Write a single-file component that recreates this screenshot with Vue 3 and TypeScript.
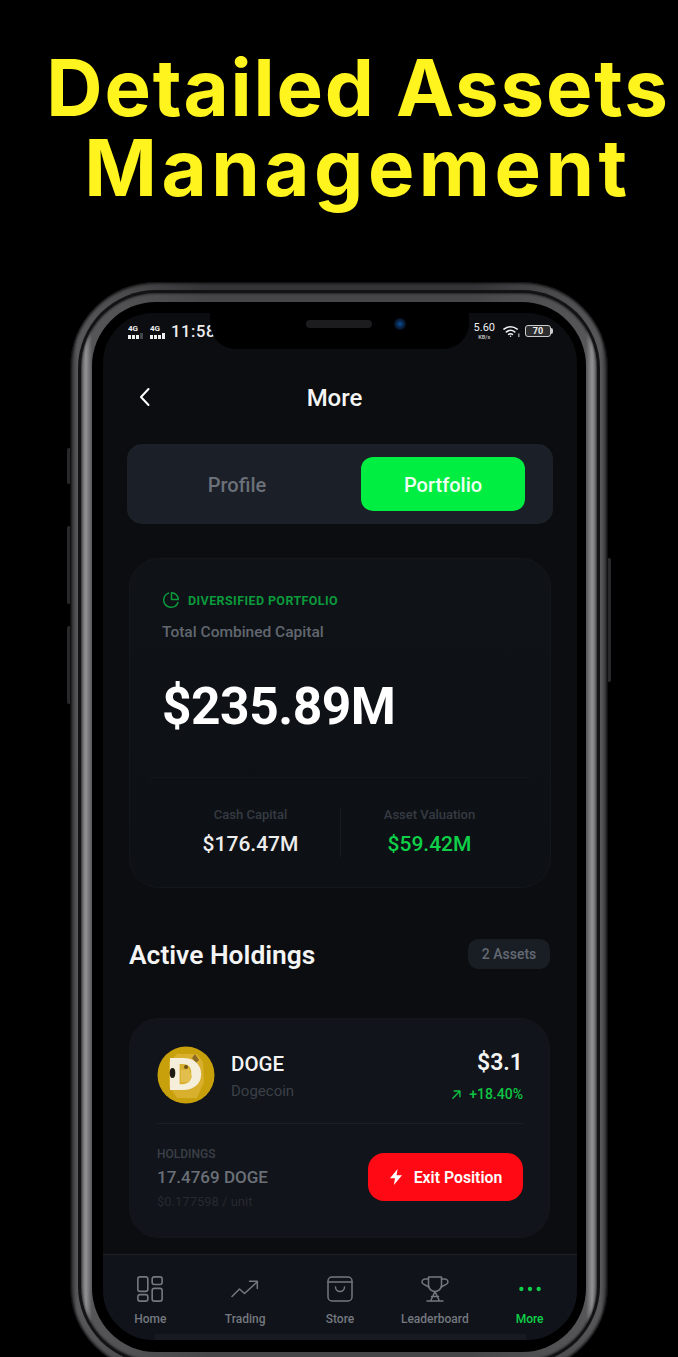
<template>
  <div class="page">
    <h1 class="headline">
      <span class="line-a">Detailed Assets</span>
      <span class="line-b">Management</span>
    </h1>

    <div class="phone">
      <span class="side-btn side-btn-a"></span>
      <span class="side-btn side-btn-b"></span>
      <span class="side-btn side-btn-c"></span>
      <span class="side-btn side-btn-r"></span>

      <div class="ring-line">
        <div class="metal">
          <div class="bezel">
            <div class="screen">
              <div class="status">
                <div class="status-left">
                  <span class="signal" v-for="n in 2" :key="n">
                    <span class="signal-label">4G</span>
                    <span class="signal-bars"><i></i><i></i><i></i><i :class="{ off: n === 1 }"></i></span>
                  </span>
                  <span class="clock">11:58</span>
                </div>
                <div class="status-right">
                  <span class="speed"><b>5.60</b><small>KB/s</small></span>
                  <svg class="wifi" viewBox="0 0 18 14" fill="none" stroke="#eee" stroke-width="1.7" stroke-linecap="round">
                    <path d="M1 5a11 11 0 0 1 14 0" />
                    <path d="M3.6 8a7 7 0 0 1 8.800 0" />
                    <path d="M6 10.600a3.400 3.400 0 0 1 4 0" />
                    <circle cx="8" cy="12.600" r="0.800" fill="#eee" stroke="none" />
                    <path d="M16.800 10v3" stroke-width="1" />
                  </svg>
                  <span class="battery"><span>70</span></span>
                </div>
              </div>

              <div class="notch">
                <span class="speaker"></span>
                <span class="camera"></span>
              </div>

              <div class="content">
                <header class="topbar">
                  <svg class="back" viewBox="0 0 14 20" fill="none" stroke="#fff" stroke-width="2" stroke-linecap="round" stroke-linejoin="round">
                    <path d="M10.500 2 3 10l7.500 8" />
                  </svg>
                  <span class="topbar-title">More</span>
                </header>

                <div class="tabs">
                  <button class="tab" type="button">Profile</button>
                  <button class="tab tab-active" type="button">Portfolio</button>
                </div>

                <section class="card summary">
                  <div class="eyebrow">
                    <svg viewBox="0 0 18 18" fill="none" stroke="currentColor" stroke-width="1.500" stroke-linecap="round">
                      <path d="M15.900 11.400A7.300 7.300 0 1 1 6.600 2.100" />
                      <path d="M9.500 1.700a7 7 0 0 1 6.800 6.800H9.500z" stroke-linejoin="round" />
                    </svg>
                    <span>DIVERSIFIED PORTFOLIO</span>
                  </div>
                  <div class="summary-label">Total Combined Capital</div>
                  <div class="summary-total">$235.89M</div>
                  <div class="split">
                    <div class="split-col">
                      <span class="split-label">Cash Capital</span>
                      <span class="split-value">$176.47M</span>
                    </div>
                    <div class="split-col">
                      <span class="split-label">Asset Valuation</span>
                      <span class="split-value green">$59.42M</span>
                    </div>
                  </div>
                </section>

                <div class="section-head">
                  <h2>Active Holdings</h2>
                  <span class="count">2 Assets</span>
                </div>

                <section class="card holding">
                  <div class="holding-top">
                    <svg class="coin" viewBox="0 0 58 58">
                      <circle cx="29" cy="29" r="28.500" fill="#c8a00c" />
                      <path d="M12 16l8-8h20l6 8 1 20-7 16H20l-8-12z" fill="#d8b02e" />
                      <path d="M35 12l3-4 4 6-3 3z" fill="#8a6a24" />
                      <text x="10" y="44" textLength="36" lengthAdjust="spacingAndGlyphs" class="coin-d">D</text>
                      <ellipse cx="15.500" cy="27" rx="2.800" ry="5" fill="#1f1a12" />
                      <circle cx="29" cy="21" r="2" fill="#6f5218" />
                      <path d="M24 24l8-1 3 8-3 5h-8z" fill="#e2be4c" />
                    </svg>
                    <div class="coin-name">
                      <span class="coin-symbol">DOGE</span>
                      <span class="coin-full">Dogecoin</span>
                    </div>
                    <div class="coin-price">
                      <span class="price">$3.1</span>
                      <span class="change">
                        <svg viewBox="0 0 12 12" fill="none" stroke="currentColor" stroke-width="1.500" stroke-linecap="round" stroke-linejoin="round">
                          <path d="M2 10l7.500-7.500M3.500 2.200h6.200v6.200" />
                        </svg>
                        +18.40%
                      </span>
                    </div>
                  </div>
                  <div class="holding-bottom">
                    <div class="amounts">
                      <span class="amount-label">HOLDINGS</span>
                      <span class="amount-value">17.4769 DOGE</span>
                      <span class="amount-unit">$0.177598 / unit</span>
                    </div>
                    <button class="exit" type="button">
                      <svg viewBox="0 0 14 16" fill="#fff"><path d="M8.600 0 1 9.200h5L4.900 16l8.100-9.800H7.600z" /></svg>
                      Exit Position
                    </button>
                  </div>
                </section>
              </div>

              <nav class="nav">
                <div class="nav-item">
                  <svg viewBox="0 0 24 24" fill="none" stroke="currentColor" stroke-width="1.500">
                    <rect x="0.800" y="0.800" width="9.200" height="13.400" rx="2" />
                    <rect x="14" y="0.800" width="9.200" height="7" rx="2" />
                    <rect x="0.800" y="17.200" width="9.200" height="6" rx="2" />
                    <rect x="14" y="11.400" width="9.200" height="11.800" rx="2" />
                  </svg>
                  <span>Home</span>
                </div>
                <div class="nav-item">
                  <svg viewBox="0 0 28 24" fill="none" stroke="currentColor" stroke-width="1.500" stroke-linecap="round" stroke-linejoin="round">
                    <path d="M1 19.500 8.500 12l5 4.500L26 5" />
                    <path d="M18.500 4.200h7.800v7.400" />
                  </svg>
                  <span>Trading</span>
                </div>
                <div class="nav-item">
                  <svg viewBox="0 0 26 26" fill="none" stroke="currentColor" stroke-width="1.500" stroke-linecap="round" stroke-linejoin="round">
                    <rect x="1" y="1" width="24" height="24" rx="4" />
                    <path d="M1 6h24" />
                    <path d="M8.500 11a4.500 4.500 0 0 0 9 0" />
                  </svg>
                  <span>Store</span>
                </div>
                <div class="nav-item">
                  <svg viewBox="0 0 28 26" fill="none" stroke="currentColor" stroke-width="1.500" stroke-linecap="round" stroke-linejoin="round">
                    <path d="M7.500 1h13v8a6.500 6.500 0 0 1-13 0z" />
                    <path d="M7.500 3H4a2.800 2.800 0 0 0-1.500 5.200L7.800 11" />
                    <path d="M20.500 3H24a2.800 2.800 0 0 1 1.500 5.200L20.200 11" />
                    <path d="M14 15.500 10 24M14 15.500 18 24M6 25h16M10.500 20.500h7" />
                  </svg>
                  <span>Leaderboard</span>
                </div>
                <div class="nav-item nav-item-active">
                  <svg viewBox="0 0 24 24" fill="currentColor">
                    <circle cx="4" cy="12" r="2" />
                    <circle cx="12" cy="12" r="2" />
                    <circle cx="20" cy="12" r="2" />
                  </svg>
                  <span>More</span>
                </div>
              </nav>
              <span class="home-bar"></span>
            </div>
          </div>
        </div>
      </div>
    </div>
  </div>
</template>

<script setup lang="ts">
  // Static mock screen, nothing to wire up.
</script>

<style>
  html,
  body {
    margin: 0;
    background: #000;
  }
</style>

<style scoped>
  .page {
    width: 678px;
    height: 1357px;
    overflow: hidden;
    background: #000;
    font-family: Roboto, 'Liberation Sans', sans-serif;
  }

  .headline {
    margin: 0;
    padding: 48px 0 0 38px;
    height: 236px;
    box-sizing: border-box;
    font-family: Inter, 'Liberation Sans', sans-serif;
    font-size: 78px;
    font-weight: 700;
    line-height: 80px;
    color: #fff41e;
    text-align: center;
    white-space: nowrap;
  }

  .line-a,
  .line-b {
    display: block;
  }

  /* Inter runs narrower than the reference face, so each line is tracked out to fit. */
  .line-a {
    letter-spacing: 1.8px;
  }

  .line-b {
    letter-spacing: 4.5px;
  }

  .phone {
    position: relative;
    width: 538px;
    height: 1090px;
    margin: 46px 0 0 70px;
    box-sizing: border-box;
    padding: 8px;
    border-radius: 86px;
    background: linear-gradient(90deg, #2c2c2e 0, #58585b 7px, #343436 25%, #343436 75%, #58585b calc(100% - 7px), #2c2c2e 100%);
    box-shadow: inset 0 0 3px 1px #000;
  }

  .side-btn {
    position: absolute;
    left: -3px;
    width: 3px;
    border-radius: 2px 0 0 2px;
    background: #29292c;
  }

  .side-btn-a {
    top: 166px;
    height: 36px;
  }

  .side-btn-b {
    top: 244px;
    height: 78px;
  }

  .side-btn-c {
    top: 344px;
    height: 78px;
  }

  .side-btn-r {
    left: auto;
    right: -3px;
    top: 276px;
    height: 124px;
    border-radius: 0 2px 2px 0;
  }

  .ring-line {
    height: 100%;
    box-sizing: border-box;
    padding: 3px;
    border-radius: 78px;
    background: #131315;
  }

  .metal {
    height: 100%;
    box-sizing: border-box;
    padding: 9px 11px;
    border-radius: 75px;
    background: linear-gradient(90deg, #636366 0, #929295 5px, #565658 11px, #464648 25%, #464648 75%, #565658 calc(100% - 11px), #929295 calc(100% - 5px), #636366 100%);
    box-shadow: inset 0 0 3px #000;
  }

  .bezel {
    height: 100%;
    box-sizing: border-box;
    padding: 11px 11px 10px;
    border-radius: 64px;
    background: #000;
  }

  .screen {
    position: relative;
    width: 474px;
    height: 1027px;
    display: flex;
    flex-direction: column;
    overflow: hidden;
    border-radius: 50px;
    background: #0b0d11;
  }

  .notch {
    position: absolute;
    top: 0;
    left: 107px;
    width: 259px;
    height: 36px;
    border-radius: 0 0 26px 26px;
    background: #000;
  }

  .speaker {
    position: absolute;
    top: 7px;
    left: 96px;
    width: 66px;
    height: 8px;
    border-radius: 4px;
    background: #1c1c1e;
  }

  .camera {
    position: absolute;
    top: 5px;
    left: 184px;
    width: 12px;
    height: 12px;
    border-radius: 50%;
    background: radial-gradient(circle, #0b4fa0 0, #0a2a55 35%, #06101e 70%);
  }

  .status {
    display: flex;
    align-items: center;
    justify-content: space-between;
    height: 36px;
    padding: 0 26px 0 25px;
    color: #eee;
    flex-shrink: 0;
  }

  .status-left,
  .status-right {
    display: flex;
    align-items: center;
  }

  .status-left {
    margin-top: 1px;
  }

  .signal {
    display: flex;
    flex-direction: column;
    width: 16px;
    margin-right: 6px;
  }

  .signal-label {
    font-size: 8px;
    font-weight: 700;
    line-height: 8px;
  }

  .signal-bars {
    display: flex;
    align-items: flex-end;
    gap: 1.500px;
    height: 6px;
  }

  .signal-bars i {
    width: 2.500px;
    height: 4px;
    background: #eee;
  }

  .signal-bars i:nth-child(4) {
    height: 6px;
  }

  .signal-bars i.off {
    opacity: 0.25;
  }

  .clock {
    margin-left: -1px;
    font-size: 16.500px;
    font-weight: 500;
    letter-spacing: 0.6px;
  }

  .speed {
    display: flex;
    flex-direction: column;
    align-items: center;
    margin-right: 8px;
  }

  .speed b {
    font-size: 11px;
    font-weight: 400;
    line-height: 12px;
  }

  .speed small {
    font-size: 5.500px;
    font-weight: 700;
    line-height: 6px;
    color: #bbb;
  }

  .wifi {
    width: 17px;
    height: 14px;
    margin-right: 5px;
  }

  .battery {
    position: relative;
    display: flex;
    align-items: center;
    justify-content: center;
    width: 26px;
    height: 12px;
    box-sizing: border-box;
    border: 1px solid #ccc;
    border-radius: 3px;
    background: #2d2d2f;
    font-size: 9px;
    font-weight: 700;
  }

  .battery::after {
    content: '';
    position: absolute;
    right: -3px;
    top: 2px;
    width: 2px;
    height: 6px;
    border-radius: 0 2px 2px 0;
    background: #ccc;
  }

  .content {
    flex: 1;
    min-height: 0;
    display: flex;
    flex-direction: column;
    padding: 0 26px;
  }

  .topbar {
    position: relative;
    height: 26px;
    margin: 36px 0 33px;
    display: flex;
    align-items: center;
    justify-content: center;
  }

  .back {
    position: absolute;
    left: 9px;
    top: 2px;
    width: 14px;
    height: 20px;
  }

  .topbar-title {
    margin-right: 11px;
    font-size: 24px;
    font-weight: 500;
    color: #f5f5f5;
  }

  .tabs {
    display: flex;
    justify-content: space-between;
    align-items: center;
    height: 80px;
    margin: 0 -2px;
    padding: 0 28px 0 13px;
    box-sizing: border-box;
    border-radius: 15px;
    background: #1b1f27;
    flex-shrink: 0;
  }

  .tab {
    width: 194px;
    height: 54px;
    padding: 2px 0 0;
    border: none;
    border-radius: 12px;
    background: transparent;
    font-family: inherit;
    font-size: 20px;
    font-weight: 500;
    color: #6b7079;
  }

  .tab-active {
    width: 164px;
    background: #00ee41;
    color: #eefff3;
  }

  .card {
    box-sizing: border-box;
    border: 1px solid #13161b;
    border-radius: 30px;
    background: #11141a;
    flex-shrink: 0;
  }

  .summary {
    height: 330px;
    margin-top: 34px;
    padding: 32px 32px 0;
    display: flex;
    flex-direction: column;
    background: linear-gradient(180deg, #0f1318 0, #0d1014 100%);
  }

  .eyebrow {
    display: flex;
    align-items: center;
    gap: 8px;
    font-size: 12.500px;
    font-weight: 700;
    letter-spacing: 0.4px;
    color: #0b9a3b;
  }

  .eyebrow svg {
    width: 18px;
    height: 18px;
  }

  .summary-label {
    margin-top: 14px;
    font-size: 15.500px;
    line-height: 18px;
    font-weight: 500;
    color: #62676f;
  }

  .summary-total {
    margin-top: 36px;
    font-size: 51.500px;
    font-weight: 700;
    line-height: 60px;
    color: #fff;
    letter-spacing: -0.5px;
  }

  .split {
    margin-top: 40px;
    margin-left: -12px;
    margin-right: -12px;
    padding-top: 29px;
    display: flex;
    justify-content: center;
    border-top: 1px solid #13161b;
  }

  .split-col {
    width: 178px;
    display: flex;
    flex-direction: column;
    align-items: center;
    gap: 8px;
  }

  .split-col + .split-col {
    border-left: 1px solid #181b20;
  }

  .split-label {
    font-size: 13px;
    line-height: 16px;
    font-weight: 500;
    color: #363b43;
  }

  .split-value {
    font-size: 21px;
    line-height: 26px;
    font-weight: 500;
    color: #ededed;
  }

  .green {
    color: #0fd048;
  }

  .section-head {
    display: flex;
    align-items: center;
    justify-content: space-between;
    height: 30px;
    margin-top: 51px;
    flex-shrink: 0;
  }

  .section-head h2 {
    margin: 0 0 -2px;
    font-size: 26.400px;
    font-weight: 600;
    color: #f4f4f4;
  }

  .count {
    width: 82px;
    height: 30px;
    margin-right: 1px;
    display: flex;
    align-items: center;
    justify-content: center;
    border-radius: 10px;
    background: #191d24;
    font-size: 14px;
    font-weight: 500;
    color: #646a73;
  }

  .holding {
    height: 220px;
    margin: 49px 1px 0 0;
    padding: 27px 26px 0 27px;
    background: #11141a;
  }

  .holding-top {
    display: flex;
    align-items: flex-start;
    height: 77px;
    border-bottom: 1px solid #1b1e24;
  }

  .coin {
    width: 58px;
    height: 58px;
    flex-shrink: 0;
    filter: blur(0.4px);
  }

  .coin-d {
    font-family: Roboto, sans-serif;
    font-size: 45px;
    font-weight: 900;
    fill: #f4eeda;
  }

  .coin-name {
    flex: 1;
    margin-left: 16px;
    display: flex;
    flex-direction: column;
  }

  .coin-symbol {
    margin-top: 5px;
    font-size: 20.500px;
    font-weight: 500;
    line-height: 26px;
    color: #f4f4f4;
  }

  .coin-full {
    margin-top: 4px;
    font-size: 15px;
    line-height: 20px;
    color: #3b4048;
  }

  .coin-price {
    display: flex;
    flex-direction: column;
    align-items: flex-end;
  }

  .price {
    margin-top: 3px;
    font-size: 23px;
    font-weight: 600;
    line-height: 28px;
    color: #f4f4f4;
  }

  .change {
    display: flex;
    align-items: center;
    gap: 7px;
    margin-top: 8px;
    font-size: 14px;
    font-weight: 500;
    line-height: 18px;
    color: #0fc443;
  }

  .change svg {
    width: 11px;
    height: 11px;
  }

  .holding-bottom {
    display: flex;
    align-items: flex-start;
    justify-content: space-between;
    padding-top: 21px;
  }

  .amounts {
    display: flex;
    flex-direction: column;
    margin-top: 1px;
  }

  .amount-label {
    font-size: 12px;
    line-height: 16px;
    font-weight: 500;
    color: #3b4048;
  }

  .amount-value {
    margin-top: 4px;
    font-size: 17px;
    line-height: 22px;
    font-weight: 500;
    color: #6b7078;
  }

  .amount-unit {
    margin-top: 6px;
    font-size: 13px;
    line-height: 16px;
    color: #262a31;
  }

  .exit {
    width: 155px;
    height: 48px;
    margin-top: 8px;
    display: flex;
    align-items: center;
    justify-content: center;
    gap: 11px;
    border: none;
    border-radius: 16px;
    background: #ff0a14;
    color: #fff;
    font-family: inherit;
    font-size: 15.800px;
    font-weight: 600;
  }

  .exit svg {
    width: 14px;
    height: 16px;
  }

  .nav {
    height: 86px;
    display: grid;
    grid-template-columns: repeat(5, 1fr);
    box-sizing: border-box;
    padding-top: 21px;
    border-top: 1px solid #1c1f25;
    background: #10131a;
    flex-shrink: 0;
  }

  .nav-item {
    display: flex;
    flex-direction: column;
    align-items: center;
    color: #74787f;
  }

  .nav-item svg {
    height: 26px;
    width: 28px;
  }

  .nav-item span {
    margin-top: 9px;
    font-size: 12px;
    font-weight: 500;
    line-height: 16px;
  }

  .nav-item-active {
    color: #0fd048;
  }

  .home-bar {
    position: absolute;
    left: 52px;
    right: 51px;
    bottom: 0;
    height: 6px;
    background: #171a20;
  }
</style>
